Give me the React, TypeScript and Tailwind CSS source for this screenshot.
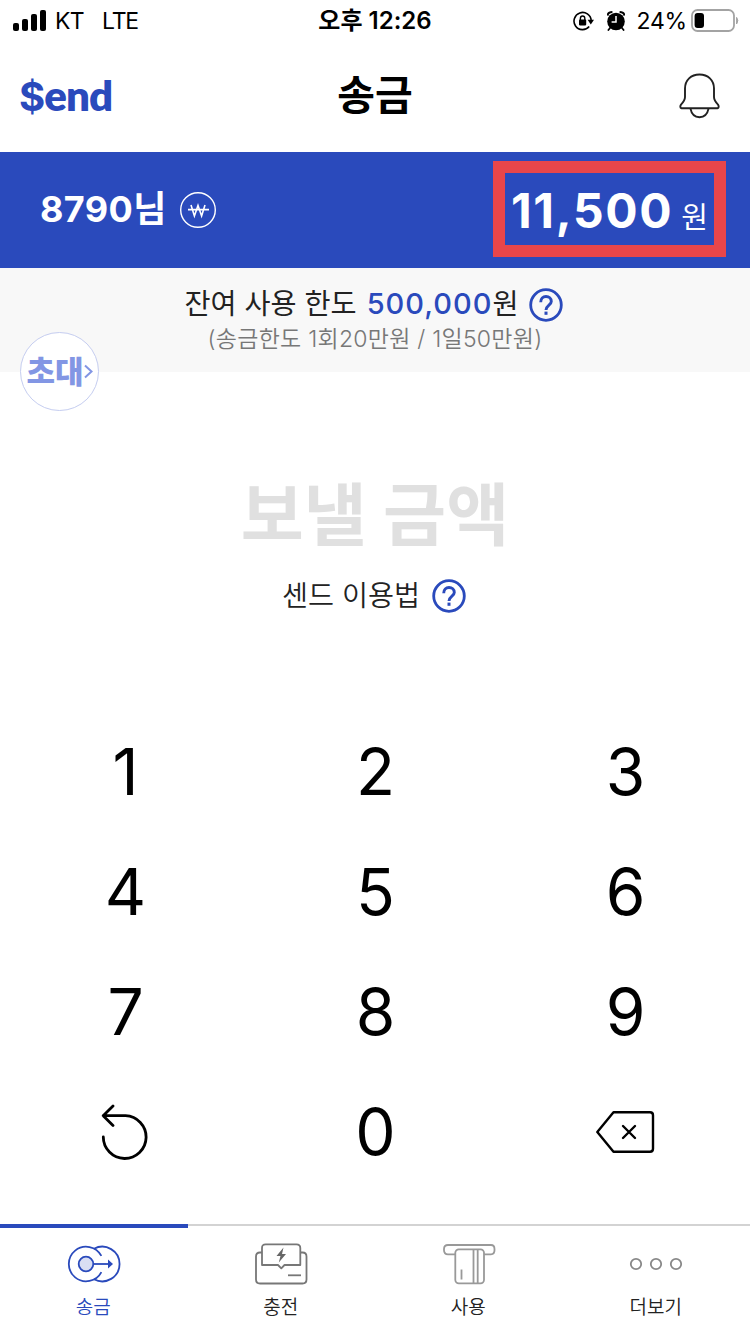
import type { ReactNode } from 'react';
import clsx from 'clsx';

function SignalIcon() {
  return (
    <svg width="34" height="22" viewBox="0 0 34 22" fill="#000">
      <rect x="0" y="13" width="6" height="8" rx="2" />
      <rect x="9" y="9" width="6" height="12" rx="2" />
      <rect x="18" y="4" width="6" height="17" rx="2" />
      <rect x="27" y="0" width="6" height="21" rx="2" />
    </svg>
  );
}

function RotationLockIcon() {
  return (
    <svg width="22" height="20" viewBox="0 0 22 20" fill="none" stroke="#000">
      <path d="M16.2 15.6A8.6 8.6 0 1 1 18.2 9.5" strokeWidth="1.6" />
      <path d="M14.6 8.8h6.4l-3.2 4.6z" fill="#000" stroke="none" />
      <rect x="6" y="8.6" width="7.2" height="5.8" rx="0.8" fill="#000" stroke="none" />
      <path d="M7.4 9V7.2a2.2 2.2 0 0 1 4.4 0V9" strokeWidth="1.4" />
    </svg>
  );
}

function AlarmIcon() {
  return (
    <svg width="18" height="20" viewBox="0 0 18 20" fill="#000">
      <circle cx="9" cy="10.5" r="8.8" />
      <path d="M0.6 4.6Q0.8 1 5.4 1M17.4 4.6Q17.2 1 12.6 1" stroke="#000" strokeWidth="2" fill="none" />
      <path d="M3.2 16.8L1.4 19M14.8 16.8l1.8 2.2" stroke="#000" strokeWidth="1.8" strokeLinecap="round" />
      <path d="M9 5v6H4.6" stroke="#fff" strokeWidth="1.5" fill="none" />
    </svg>
  );
}

function BatteryIcon() {
  return (
    <svg width="48" height="23" viewBox="0 0 48 23" fill="none">
      <rect x="1" y="1" width="42" height="21" rx="5.5" stroke="#a3a3a3" strokeWidth="1.8" />
      <rect x="3.6" y="4" width="9.4" height="15" rx="3" fill="#000" />
      <path d="M45.6 8.4q2.4 3.1 0 6.6z" fill="#a3a3a3" stroke="#a3a3a3" />
    </svg>
  );
}

function BellIcon() {
  return (
    <svg width="42" height="46" viewBox="0 0 42 46" fill="none" stroke="#222" strokeWidth="1.9" strokeLinejoin="round">
      <path d="M2.5 35.2C1 35 1 33 2 31.6 5 28.5 6 27 6 24V15.6C6 7 12 1.5 20.5 1.5S35 7 35 15.6V24C35 27 36 28.5 39 31.6 40 33 40 35 38.5 35.2Z" />
      <path d="M11.4 35.4C12.5 41 16 44.2 20.5 44.2S28.5 41 29.6 35.4" />
    </svg>
  );
}

function WonIcon() {
  return (
    <svg width="36" height="36" viewBox="0 0 36 36" fill="none" stroke="#fff">
      <circle cx="18" cy="18" r="17.3" strokeWidth="1.4" />
      <path d="M11 13l3.4 11L18 13.5l3.6 10.5L25 13M8 17.6h21" strokeWidth="1.6" />
    </svg>
  );
}

function HelpIcon() {
  return (
    <svg width="34" height="34" viewBox="0 0 34 34" fill="none" stroke="#2a4abc">
      <circle cx="17" cy="17" r="15.3" strokeWidth="2.8" />
      <path d="M11.7 14.2C11.7 10.5 14 8.5 17 8.5S22.3 10.5 22.3 13.4C22.3 17 17 17.2 17 22" strokeWidth="2.9" />
      <path d="M17 23.6v3.2" strokeWidth="3" />
    </svg>
  );
}

function ResetIcon() {
  return (
    <svg width="48" height="56" viewBox="0 0 48 56" fill="none" stroke="#000" strokeWidth="2.8" strokeLinecap="round" strokeLinejoin="round">
      <path d="M12 2L2.2 11.7 12 21.5M2.2 11.7H24.5A21.4 21.4 0 1 1 2.3 33" />
    </svg>
  );
}

function BackspaceIcon() {
  return (
    <svg width="59" height="42" viewBox="0 0 59 42" fill="none" stroke="#000" strokeWidth="2.4" strokeLinecap="round" strokeLinejoin="round">
      <path d="M17.5 1.2H54Q57 1.2 57 4.2V37.8Q57 40.8 54 40.8H17.5L1.3 21Z" />
      <path d="M27 15l12 12M39 15l-12 12" />
    </svg>
  );
}

function SendIcon() {
  return (
    <svg width="54" height="42" viewBox="0 0 54 42" fill="none" stroke="#2a4abc" strokeWidth="1.8">
      <path d="M34.4 12.9A17.3 17.3 0 1 0 34.4 29.1" />
      <path d="M27 5.8A17.3 17.3 0 1 1 27 36.2" />
      <circle cx="19" cy="21" r="7.3" fill="#d9def3" />
      <path d="M26.5 21H42" />
      <path d="M41 16.5v9l5-4.5z" fill="#2a4abc" stroke="none" />
    </svg>
  );
}

function ChargeIcon() {
  return (
    <svg width="54" height="42" viewBox="0 0 54 42" fill="none" stroke="#777" strokeWidth="1.8" strokeLinejoin="round">
      <path d="M8 9.5H6Q2 9.5 2 13.5V36.5Q2 40.5 6 40.5H48.5Q52.5 40.5 52.5 36.5V13.5Q52.5 9.5 48.5 9.5H46.5" />
      <path d="M8 22V5Q8 1.3 11.7 1.3H42.5Q46.3 1.3 46.3 5V22H30.5L27.3 25.3 24 22Z" />
      <path d="M29.5 4.5L22.5 13h4l-1.7 6.5L32 11h-4z" fill="#666" stroke="none" />
      <path d="M34 32.3H47" />
    </svg>
  );
}

function UseIcon() {
  return (
    <svg width="54" height="42" viewBox="0 0 54 42" fill="none" stroke="#999" strokeWidth="1.8">
      <path d="M13 11.3H6Q2 11.3 2 7.3V6Q2 2 6 2H49Q52.5 2 52.5 6V7.3Q52.5 11.3 49 11.3H42" />
      <rect x="13.3" y="6.3" width="28.7" height="34" rx="3.5" />
      <path d="M31.5 6.3V40M35.7 6.3V40M19.5 26.5V36.5" />
    </svg>
  );
}

function MoreIcon() {
  return (
    <svg width="54" height="42" viewBox="0 0 54 42" fill="none" stroke="#888" strokeWidth="1.8">
      <circle cx="7" cy="21" r="5.2" />
      <circle cx="27" cy="21" r="5.2" />
      <circle cx="47" cy="21" r="5.2" />
    </svg>
  );
}

const keys: { id: string; label: ReactNode }[] = [
  ...['1', '2', '3', '4', '5', '6', '7', '8', '9'].map((n) => ({ id: n, label: n })),
  { id: 'reset', label: <ResetIcon /> },
  { id: '0', label: '0' },
  { id: 'backspace', label: <BackspaceIcon /> },
];

const tabs = [
  { label: '송금', icon: <SendIcon />, active: true },
  { label: '충전', icon: <ChargeIcon />, active: false },
  { label: '사용', icon: <UseIcon />, active: false },
  { label: '더보기', icon: <MoreIcon />, active: false },
];

export default function App() {
  return (
    <div className="flex flex-col w-[750px] h-[1334px] overflow-hidden bg-white text-black font-['Inter','Noto_Sans_CJK_KR',sans-serif]">
      {/* Status Bar */}
      <div className="grid grid-cols-3 h-10 items-center pl-[13px] text-[23px] leading-10">
        <div className="flex items-center">
          <SignalIcon />
          <span className="ml-2 tracking-[-0.6px]">KT</span>
          <span className="ml-[18px] tracking-[-1.2px]">LTE</span>
        </div>
        <div className="pt-px pr-[13px] text-center text-[24px] font-semibold whitespace-nowrap">오후 12:26</div>
        <div className="flex items-center justify-end pr-[11px]">
          <RotationLockIcon />
          <span className="ml-3"><AlarmIcon /></span>
          <span className="ml-[11px] mr-1 pt-px tracking-[-0.2px]">24%</span>
          <BatteryIcon />
        </div>
      </div>

      {/* Header */}
      <header className="grid grid-cols-3 h-28 items-center px-5">
        <div className="flex items-baseline pb-px font-['Lato',sans-serif] text-[42px] leading-[48px] font-extrabold text-[#2a4abc] tracking-[-0.9px]">
          <span className="-ml-px font-['Inter',sans-serif] text-[40px] font-bold">$</span>
          <span>end</span>
        </div>
        <h1 className="pb-[2px] text-center text-[41px] leading-[48px] font-bold">송금</h1>
        <button className="justify-self-end mr-[9px]">
          <BellIcon />
        </button>
      </header>

      {/* Balance */}
      <section className="flex h-[116px] items-center justify-between bg-[#2a4abc] pl-10 pr-6 text-white">
        <div className="flex items-center gap-[13px]">
          <span className="pb-[2px] text-[36px] leading-[44px] font-bold tracking-[0.4px]">8790님</span>
          <WonIcon />
        </div>
        <div className="flex h-24 w-[233px] items-baseline justify-center border-[12px] border-[#e8464a] leading-[75px] mb-[2px] whitespace-nowrap">
          <span className="text-[48px] font-bold tracking-[1.6px]">11,500</span>
          <span className="ml-2 text-[29px]">원</span>
        </div>
      </section>

      {/* Remaining Limit */}
      <section className="relative flex h-[104px] flex-col items-center bg-[#f8f8f8] pt-4">
        <div className="flex items-center pr-[2px] text-[28.3px] leading-[40px] text-[#222] whitespace-nowrap">
          <span>잔여 사용 한도</span>
          <span className="ml-2.5 text-[29px] font-medium tracking-[1px] text-[#2a4abc]">500,000</span>
          <span className="mr-[11px]">원</span>
          <span className="pt-[2px]"><HelpIcon /></span>
        </div>
        <p className="text-[23px] leading-[30px] font-[350] tracking-[0.25px] text-[#777] whitespace-nowrap">
          (송금한도 1회20만원 / 1일50만원)
        </p>
        <button className="absolute left-5 top-16 flex size-[79px] items-center justify-center rounded-full border border-[#c5cdf0] bg-white text-[#8296e4]">
          <span className="text-[31px] leading-8 font-black">초대</span>
          <svg width="9" height="15" viewBox="0 0 9 15" fill="none" stroke="#8296e4" strokeWidth="2">
            <path d="M1 1.5l6.5 6-6.5 6" />
          </svg>
        </button>
      </section>

      {/* Amount */}
      <section className="flex h-[340px] flex-col items-center pt-[100px]">
        <div className="text-[68.5px] leading-[88px] font-bold text-[#e0e0e0]">보낼 금액</div>
        <button className="mt-[18px] flex items-center gap-3 pr-[2px] text-[28.3px] leading-9 font-[350] text-[#222]">
          센드 이용법
          <HelpIcon />
        </button>
      </section>

      {/* Keypad */}
      <section className="grid h-[480px] grid-cols-3 grid-rows-4">
        {keys.map((key) => (
          <button key={key.id} className="flex items-center justify-center text-[64px] leading-[64px] tracking-[-1px]">
            {key.label}
          </button>
        ))}
      </section>

      {/* Bottom Tabs */}
      <nav className="mt-8 grid h-[110px] grid-cols-4">
        {tabs.map((tab) => (
          <button
            key={tab.label}
            className={clsx(
              'flex flex-col items-center text-[19px] leading-6',
              tab.active
                ? 'border-t-4 border-[#2a4abc] pt-[15px] text-[#2a4abc]'
                : 'border-t-2 border-[#d3d3d3] pt-[17px] text-[#222]'
            )}
          >
            {tab.icon}
            <span className="mt-[11px] pr-px font-[350]">{tab.label}</span>
          </button>
        ))}
      </nav>
    </div>
  );
}
